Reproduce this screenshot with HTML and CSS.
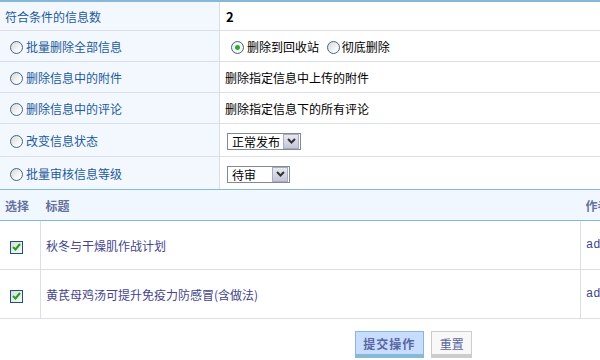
FILE: index.html
```html
<!DOCTYPE html>
<html lang="zh-CN">
<head>
    <meta charset="UTF-8">
    <title>批量操作信息</title>
    <link rel="stylesheet" href="styles.css">
</head>
<body>

<div class="page">
    <table class="opts">
        <tr class="first">
            <td class="label">符合条件的信息数</td>
            <td class="value"><b>2</b></td>
        </tr>
        <tr>
            <td class="label"><span class="radio"></span>批量删除全部信息</td>
            <td class="value">
                <span class="radio on"></span>删除到回收站
                <span class="radio gap"></span>彻底删除
            </td>
        </tr>
        <tr>
            <td class="label"><span class="radio"></span>删除信息中的附件</td>
            <td class="value">删除指定信息中上传的附件</td>
        </tr>
        <tr>
            <td class="label"><span class="radio"></span>删除信息中的评论</td>
            <td class="value">删除指定信息下的所有评论</td>
        </tr>
        <tr class="tall">
            <td class="label"><span class="radio"></span>改变信息状态</td>
            <td class="value">
                <span class="select wide">正常发布<span class="arrow"><svg width="9" height="6" viewBox="0 0 9 6"><path d="M1 1l3.5 3.5L8 1" fill="none" stroke="#333" stroke-width="2"/></svg></span></span>
            </td>
        </tr>
        <tr class="tall">
            <td class="label"><span class="radio"></span>批量审核信息等级</td>
            <td class="value">
                <span class="select">待审<span class="arrow"><svg width="9" height="6" viewBox="0 0 9 6"><path d="M1 1l3.5 3.5L8 1" fill="none" stroke="#333" stroke-width="2"/></svg></span></span>
            </td>
        </tr>
    </table>

    <table class="list">
        <tr class="head">
            <th class="pick">选择</th>
            <th class="title">标题</th>
            <th class="author">作者</th>
        </tr>
        <tr>
            <td class="pick"><span class="check"><svg width="9" height="8" viewBox="0 0 9 8"><path d="M1 4l2.5 2.5L8 1" fill="none" stroke="#1fa01f" stroke-width="2"/></svg></span></td>
            <td class="title">秋冬与干燥肌作战计划</td>
            <td class="author">admin</td>
        </tr>
        <tr>
            <td class="pick"><span class="check"><svg width="9" height="8" viewBox="0 0 9 8"><path d="M1 4l2.5 2.5L8 1" fill="none" stroke="#1fa01f" stroke-width="2"/></svg></span></td>
            <td class="title">黄芪母鸡汤可提升免疫力防感冒(含做法)</td>
            <td class="author">admin</td>
        </tr>
    </table>

    <div class="actions">
        <button class="btn submit">提交操作</button>
        <button class="btn reset">重置</button>
    </div>
</div>

</body>
</html>
```

FILE: styles.css
```css
html {
    overflow: hidden;
}
body {
    margin: 0;
    font-family: "Noto Sans CJK SC", sans-serif;
    font-size: 12px;
    color: #000;
    background: #fff;
}
.page {
    width: 827px;
}
table {
    width: 100%;
    border-collapse: collapse;
}
td, th {
    padding: 0 5px;
    vertical-align: middle;
}

/* options table */
.opts {
    border-top: 2px solid #86b8d8;
}
.opts td {
    height: 30px;
    border-bottom: 1px solid #d9dee8;
}
.opts tr.first td {
    height: 28px;
}
.opts tr.tall td {
    height: 32px;
}
.opts tr:last-child td {
    border-bottom: 1px solid #86b8d8;
}
.opts .label {
    width: 209px;
    background: #f3f8fe;
    color: #1d5b9c;
    border-right: 1px solid #d9dee8;
}
.opts .value b {
    font-size: 13px;
    padding-left: 1px;
}

.radio {
    display: inline-block;
    width: 11px;
    height: 11px;
    border: 1px solid #41658e;
    border-radius: 50%;
    background: linear-gradient(135deg, #d8d8d2, #fafafa 70%);
    vertical-align: -2px;
    margin: 0 3px 0 5px;
}
.radio.on {
    background: radial-gradient(circle, #2cab2c 0, #2cab2c 2px, #fafafa 3px, #e6e6e0 100%);
    margin-left: 6px;
}
.radio.gap {
    margin-left: 5px;
    margin-right: 2px;
}

.select {
    display: inline-flex;
    align-items: center;
    justify-content: space-between;
    width: 57px;
    height: 15px;
    padding-left: 4px;
    border: 1px solid #7f8b99;
    background: #fff;
    font-size: 12px;
    vertical-align: middle;
    margin-left: 2px;
}
.select.wide {
    width: 68px;
}
.select .arrow {
    display: flex;
    align-items: center;
    justify-content: center;
    width: 14px;
    height: 13px;
    margin-right: 1px;
    background: linear-gradient(#e8e8f0, #c4c6d8);
    border: 1px solid #a8acbc;
}

/* list table */
.list th {
    height: 30px;
    background: #f1f7ff;
    color: #66709e;
    text-align: left;
    font-size: 12px;
    font-weight: bold;
    border-bottom: 1px solid #86b8d8;
}
.list td {
    height: 48px;
    border-bottom: 1px solid #d9dee8;
    color: #45458a;
}
.list td.pick {
    width: 30px;
    text-align: left;
    border-right: 1px solid #d9dee8;
}
.list td.title {
    width: 529px;
    border-right: 1px solid #d9dee8;
}
.list td.author {
    font-family: "Liberation Mono", monospace;
}

.check {
    display: inline-flex;
    align-items: center;
    justify-content: center;
    width: 11px;
    height: 11px;
    border: 1px solid #1c5180;
    background: linear-gradient(135deg, #dcdcd6, #f8f8f8);
    margin-left: 5px;
    vertical-align: middle;
}

/* buttons */
.actions {
    text-align: center;
    padding-top: 12px;
}
.btn {
    font-family: "Noto Sans CJK SC", sans-serif;
    font-size: 12px;
    height: 27px;
    padding: 0;
    cursor: pointer;
    vertical-align: top;
}
.submit {
    width: 69px;
    margin-right: 5px;
    background: #c7dcff;
    border: 1px solid #86b9d6;
    border-bottom: 4px solid #86b9d6;
    color: #5a66a0;
    font-weight: bold;
    letter-spacing: 1px;
}
.reset {
    width: 41px;
    background: #f8f8f8;
    border: 1px solid #cccccc;
    border-bottom: 4px solid #cccccc;
    color: #5a66a0;
}
```
